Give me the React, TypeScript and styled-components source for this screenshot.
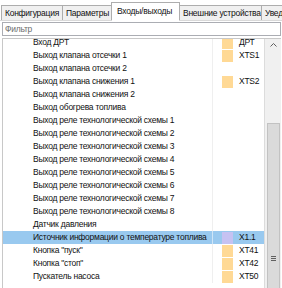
import React, { FC } from 'react';
import styled, { createGlobalStyle } from 'styled-components';

const GlobalStyle = createGlobalStyle`
  html, body { margin: 0; padding: 0; background: #fff; }
`;

const Root = styled.div`
  width: 282px;
  height: 288px;
  overflow: hidden;
  background: #fff;
  font-family: "Liberation Sans", Arial, sans-serif;
  font-size: 8.5px;
  letter-spacing: -0.25px;
  color: #111;
  display: flex;
  flex-direction: column;
`;

const TabBar = styled.div`
  display: flex;
  align-items: flex-end;
  height: 20px;
  padding-left: 2px;
  border-bottom: 1px solid #d9d9d9;
  flex-shrink: 0;
`;

const Tab = styled.div<{ active?: boolean; w: number }>`
  flex-shrink: 0;
  width: ${({ w }) => w}px;
  height: ${({ active }) => (active ? 19 : 15)}px;
  margin-bottom: ${({ active }) => (active ? -1 : 0)}px;
  box-sizing: border-box;
  border: 1px solid #adadad;
  border-bottom: ${({ active }) => (active ? '1px solid #fff' : '0')};
  margin-left: -1px;
  background: ${({ active }) => (active ? '#fff' : '#f0f0f0')};
  padding: ${({ active }) => (active ? '3px 0 0 5px' : '2px 0 0 3px')};
  white-space: nowrap;
  overflow: hidden;
  line-height: 11px;
`;

const Filter = styled.div`
  flex-shrink: 0;
  height: 14px;
  margin: 1px 1px 2px 2px;
  box-sizing: border-box;
  border: 1px solid #abadb3;
  color: #6d6d6d;
  padding-left: 2px;
  line-height: 12px;
`;

const ListBox = styled.div`
  flex: 1;
  display: flex;
  margin: 0 1px 0 2px;
  border-top: 1px solid #c8c8c8;
  border-left: 1px solid #c8c8c8;
  overflow: hidden;
`;

const Rows = styled.div`
  flex: 1;
  overflow: hidden;
`;

const RowsInner = styled.div`
  margin-top: -3px;
`;

const Row = styled.div<{ selected?: boolean }>`
  display: grid;
  grid-template-columns: 210px 50px;
  height: 13px;
  line-height: 13px;
  background: ${({ selected }) => (selected ? '#99c9ef' : 'transparent')};
  white-space: nowrap;
`;

const NameCell = styled.div<{ selected?: boolean }>`
  padding-left: 30px;
  border-right: 1px solid ${({ selected }) => (selected ? '#cfe5f7' : '#efefef')};
  overflow: hidden;
`;

const PinCell = styled.div`
  display: flex;
  align-items: center;
  padding-left: 9px;
`;

const Swatch = styled.span<{ color: string }>`
  width: 11px;
  height: 12px;
  background: ${({ color }) => color};
  margin-right: 6px;
  flex-shrink: 0;
`;

const Scrollbar = styled.div`
  width: 17px;
  flex-shrink: 0;
  box-sizing: border-box;
  border-left: 1px solid #dcdcdc;
  background: #f0f0f0;
  display: flex;
  flex-direction: column;
  align-items: center;
`;

const ArrowButton = styled.div`
  width: 13px;
  height: 13px;
  margin-top: 4px;
  display: flex;
  align-items: center;
  justify-content: center;
`;

const Thumb = styled.div`
  width: 13px;
  height: 270px;
  margin-top: 76px;
  flex-shrink: 0;
  box-sizing: border-box;
  background: #dadada;
  border: 1px solid #c2c2c2;
  display: flex;
  justify-content: center;
  padding-top: 132px;
`;

type Item = { name: string; pin?: string; color?: string; selected?: boolean };

const ORANGE = '#ffd995';
const PURPLE = '#c6c2f2';

const items: Item[] = [
  { name: 'Вход ДРТ', pin: 'ДРТ', color: ORANGE },
  { name: 'Выход клапана отсечки 1', pin: 'XTS1', color: ORANGE },
  { name: 'Выход клапана отсечки 2' },
  { name: 'Выход клапана снижения 1', pin: 'XTS2', color: ORANGE },
  { name: 'Выход клапана снижения 2' },
  { name: 'Выход обогрева топлива' },
  { name: 'Выход реле технологической схемы 1' },
  { name: 'Выход реле технологической схемы 2' },
  { name: 'Выход реле технологической схемы 3' },
  { name: 'Выход реле технологической схемы 4' },
  { name: 'Выход реле технологической схемы 5' },
  { name: 'Выход реле технологической схемы 6' },
  { name: 'Выход реле технологической схемы 7' },
  { name: 'Выход реле технологической схемы 8' },
  { name: 'Датчик давления' },
  { name: 'Источник информации о температуре топлива', pin: 'X1.1', color: PURPLE, selected: true },
  { name: 'Кнопка "пуск"', pin: 'XT41', color: ORANGE },
  { name: 'Кнопка "стоп"', pin: 'XT42', color: ORANGE },
  { name: 'Пускатель насоса', pin: 'XT50', color: ORANGE },
];

const App: FC = () => {
  return (
    <Root>
      <GlobalStyle />
      <TabBar>
        <Tab w={62}>Конфигурация</Tab>
        <Tab w={50}>Параметры</Tab>
        <Tab w={69} active>Входы/выходы</Tab>
        <Tab w={83}>Внешние устройства</Tab>
        <Tab w={30}>Уведомления</Tab>
      </TabBar>
      <Filter>Фильтр</Filter>
      <ListBox>
        <Rows>
          <RowsInner>
            {items.map((item, index) => (
              <Row key={index} selected={item.selected}>
                <NameCell selected={item.selected}>{item.name}</NameCell>
                <PinCell>
                  {item.color && <Swatch color={item.color} />}
                  {item.pin}
                </PinCell>
              </Row>
            ))}
          </RowsInner>
        </Rows>
        <Scrollbar>
          <ArrowButton>
            <svg width="7" height="4" viewBox="0 0 7 4">
              <path d="M0.5 3.5 L3.5 0.5 L6.5 3.5" fill="none" stroke="#606060" strokeWidth="1" />
            </svg>
          </ArrowButton>
          <Thumb>
            <svg width="5" height="5" viewBox="0 0 5 5">
              <path d="M0 0.5 H5 M0 2.5 H5 M0 4.5 H5" stroke="#606060" strokeWidth="1" />
            </svg>
          </Thumb>
        </Scrollbar>
      </ListBox>
    </Root>
  );
};

export default App;
